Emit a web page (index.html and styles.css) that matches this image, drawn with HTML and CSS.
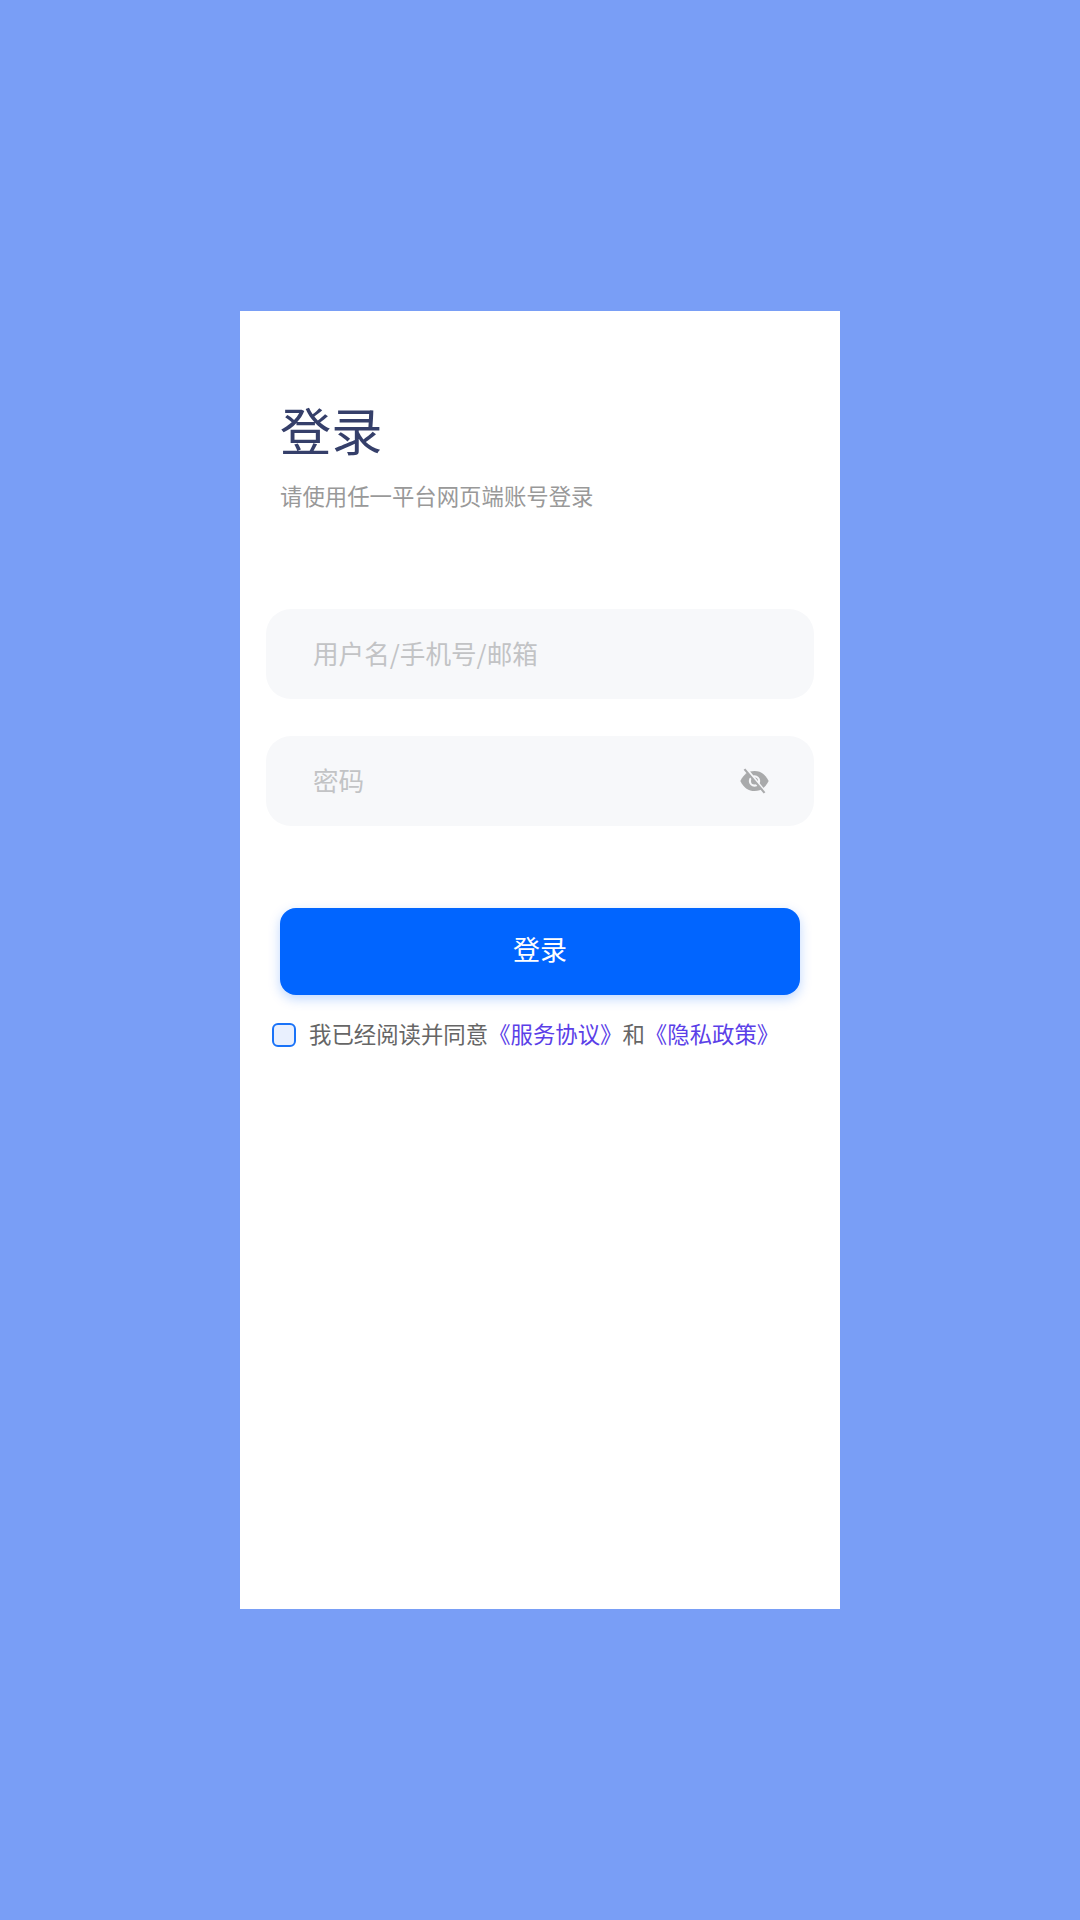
FILE: index.html

```html
<!DOCTYPE html>
<html lang="zh-CN">
<head>
  <meta charset="UTF-8" />
  <meta name="viewport" content="width=device-width, initial-scale=1.0"/>
  <title>登录</title>
  <link rel="stylesheet" href="styles.css">
</head>
<body>
<div class="card">
  <div class="head">
    <h1>登录</h1>
    <p>请使用任一平台网页端账号登录</p>
  </div>
  <form class="form">
    <div class="field">
      <input type="text" placeholder="用户名/手机号/邮箱">
    </div>
    <div class="field">
      <input type="password" placeholder="密码">
      <svg class="eye" viewBox="0 0 24 22" width="29" height="26">
        <path d="M0 11C3 5 7 2.500 12 2.500s9 2.500 12 8.500c-3 6-7 8.500-12 8.500S3 17 0 11z" fill="#a9aaab"/>
        <circle cx="12" cy="11" r="4.800" fill="#f6f7f9"/>
        <circle cx="12" cy="11" r="3" fill="#a9aaab"/>
        <path d="M5 0.500l16 19.500" stroke="#f6f7f9" stroke-width="2"/>
        <path d="M3.500 1l17 20" stroke="#a9aaab" stroke-width="1.800"/>
      </svg>
    </div>
    <button type="button" class="submit">登录</button>
    <label class="agree">
      <span class="check"></span>
      <span class="agree-text">我已经阅读并同意<a href="#">《服务协议》</a>和<a href="#">《隐私政策》</a></span>
    </label>
  </form>
</div>
</body>
</html>
```

FILE: styles.css

```css
* { box-sizing: border-box; }
body { margin: 0; min-height: 1920px; background: #799ef6; display: flex; align-items: center; justify-content: center; font-family: "Noto Sans CJK SC", "Noto Sans", sans-serif; }
.card { width: 600px; height: 1298px; background: #fff; padding-top: 83px; }
.head { padding: 0 40px; }
.head h1 { margin: 0; font-size: 51.2px; line-height: 70px; font-weight: 400; color: #353f6a; }
.head p { margin: 15px 0 0; font-size: 22.4px; line-height: 32px; color: #999; }
.form { margin-top: 98px; padding: 0 26px; }
.field { height: 90px; margin-bottom: 37px; padding: 0 45px 0 47px; background: #f7f8fa; border-radius: 25px; display: flex; align-items: center; }
.field input { flex: 1; min-width: 0; height: 100%; padding: 0 0 4px; border: none; outline: none; background: transparent; font: inherit; font-size: 25.6px; color: #333; }
.field input::placeholder { color: #c2c3c5; opacity: 1; }
.eye { flex: none; margin-left: 10px; }
.submit { display: block; width: 520px; height: 87px; margin: 82px auto 0; padding: 0 0 6px; border: none; border-radius: 16px; background: #0165ff; color: #fff; font: inherit; font-size: 27px; box-shadow: 0 4px 12px rgba(1, 101, 255, 0.25); cursor: pointer; }
.agree { display: flex; align-items: center; gap: 13px; margin: 23px 0 0 6px; font-size: 22.4px; line-height: 30px; color: #666; }
.agree-text { padding-bottom: 4px; }
.check { flex: none; width: 24px; height: 24px; border: 2px solid #1a73f8; border-radius: 6px; background: #e9f0fe; }
.agree a { color: #5b3fe8; text-decoration: none; }
```
